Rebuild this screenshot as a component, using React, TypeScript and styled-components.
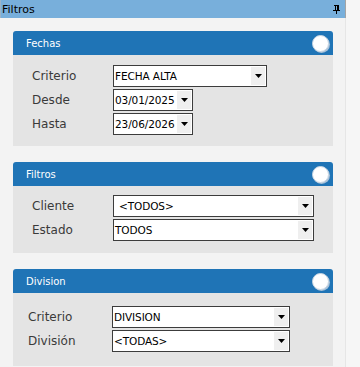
import React from "react";
import styled, { createGlobalStyle } from "styled-components";

const GlobalStyle = createGlobalStyle`
  html, body {
    margin: 0;
    padding: 0;
    background: #f6f6f6;
    font-family: "DejaVu Sans", Verdana, sans-serif;
  }
`;

const Window = styled.div`
  width: 346px;
  min-height: 367px;
  background: #f3f3f3;
  border-right: 1px solid #e6e6e6;
  box-sizing: border-box;
`;

const TitleBar = styled.div`
  height: 18px;
  display: flex;
  align-items: center;
  justify-content: space-between;
  padding: 0 5px 0 1px;
  background: #78afdb;
  border-left: 1px solid #9bb4c9;
  border-right: 1px solid #a4a4a4;
  margin-right: -1px;
  font-size: 11px;
  color: #000;
`;

const Content = styled.div`
  display: flex;
  flex-direction: column;
  gap: 16px;
  padding: 13px 13px 1px 13px;
`;

const Panel = styled.section`
  width: 320px;
  display: flex;
  flex-direction: column;
`;

const PanelHeader = styled.div`
  height: 24px;
  display: flex;
  align-items: center;
  justify-content: space-between;
  padding: 0 4px 0 13px;
  background: #1f74b6;
  border-radius: 3px 3px 0 0;
`;

const PanelTitle = styled.span`
  color: #fff;
  font-size: 10px;
`;

const Knob = styled.span`
  width: 15px;
  height: 15px;
  border-radius: 50%;
  background: #fff;
  border: 1px solid #c9d6e3;
  box-shadow: 1px 1px 0 #a9c2d9;
`;

const PanelBody = styled.div<{ $indent: number; $labelWidth: number; $top: number; $bottom: number }>`
  display: grid;
  grid-template-columns: ${(p) => p.$labelWidth}px auto;
  row-gap: 2px;
  align-items: center;
  justify-items: start;
  padding: ${(p) => p.$top}px 0 ${(p) => p.$bottom}px ${(p) => p.$indent}px;
  background: #e4e4e4;
`;

const FieldLabel = styled.label`
  font-size: 12px;
  color: #3a3a3a;
`;

const SelectBox = styled.div<{ $width: number }>`
  width: ${(p) => p.$width}px;
  height: 22px;
  box-sizing: border-box;
  display: flex;
  align-items: stretch;
  border: 1px solid #3c3c3c;
  background: #fff;
`;

const SelectValue = styled.span<{ $pad: number }>`
  flex: 1;
  display: flex;
  align-items: center;
  padding-left: ${(p) => p.$pad}px;
  font-size: 10.5px;
  letter-spacing: -0.1px;
  color: #000;
  white-space: nowrap;
  overflow: hidden;
`;

const SelectButton = styled.span`
  width: 14px;
  margin: 1px 1px 1px 0;
  display: flex;
  align-items: center;
  justify-content: center;
  background: #efefef;
`;

const Arrow = () => (
  <svg width="7" height="4" viewBox="0 0 7 4">
    <path d="M0 0h7L3.5 4z" fill="#000" />
  </svg>
);

const Pin = () => (
  <svg width="7" height="9" viewBox="0 0 7 9" shapeRendering="crispEdges">
    <path d="M1 0h5v1H1zM2 1h1v4H2zM4 1h2v4H4zM0 5h7v1H0zM3 6h1v3H3z" fill="#000" />
  </svg>
);

interface SelectProps {
  value: string;
  width: number;
  pad?: number;
}

const Select = ({ value, width, pad = 1 }: SelectProps) => (
  <SelectBox $width={width}>
    <SelectValue $pad={pad}>{value}</SelectValue>
    <SelectButton>
      <Arrow />
    </SelectButton>
  </SelectBox>
);

const App = () => {
  return (
    <>
      <GlobalStyle />
      <Window>
        <TitleBar>
          <span>Filtros</span>
          <Pin />
        </TitleBar>
        <Content>
          <Panel>
            <PanelHeader>
              <PanelTitle>Fechas</PanelTitle>
              <Knob />
            </PanelHeader>
            <PanelBody $indent={19} $labelWidth={81} $top={10} $bottom={11}>
              <FieldLabel>Criterio</FieldLabel>
              <Select value="FECHA ALTA" width={154} />
              <FieldLabel>Desde</FieldLabel>
              <Select value="03/01/2025" width={80} />
              <FieldLabel>Hasta</FieldLabel>
              <Select value="23/06/2026" width={80} />
            </PanelBody>
          </Panel>

          <Panel>
            <PanelHeader>
              <PanelTitle>Filtros</PanelTitle>
              <Knob />
            </PanelHeader>
            <PanelBody $indent={19} $labelWidth={81} $top={9} $bottom={12}>
              <FieldLabel>Cliente</FieldLabel>
              <Select value="<TODOS>" width={201} pad={5} />
              <FieldLabel>Estado</FieldLabel>
              <Select value="TODOS" width={201} />
            </PanelBody>
          </Panel>

          <Panel>
            <PanelHeader>
              <PanelTitle>Division</PanelTitle>
              <Knob />
            </PanelHeader>
            <PanelBody $indent={15} $labelWidth={84} $top={13} $bottom={14}>
              <FieldLabel>Criterio</FieldLabel>
              <Select value="DIVISION" width={178} />
              <FieldLabel>División</FieldLabel>
              <Select value="<TODAS>" width={178} />
            </PanelBody>
          </Panel>
        </Content>
      </Window>
    </>
  );
};

export default App;
